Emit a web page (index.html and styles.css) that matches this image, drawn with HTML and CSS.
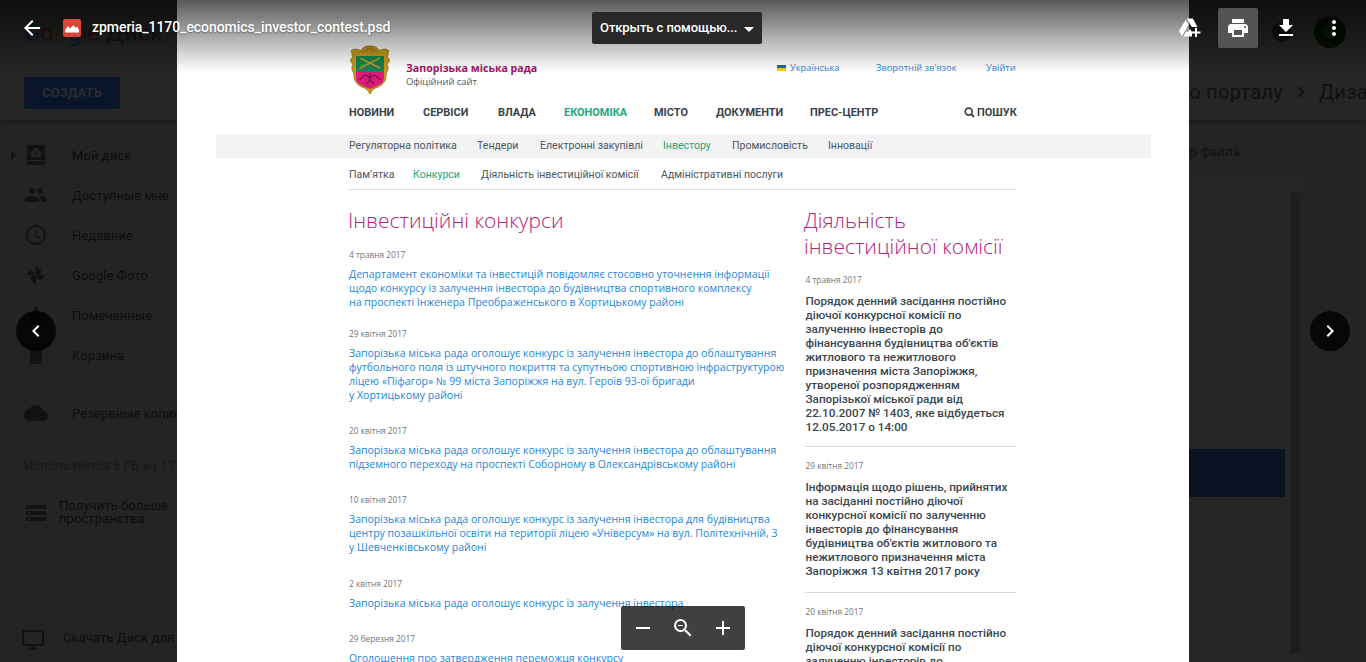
FILE: index.html
```html
<!DOCTYPE html>
<html lang="ru">
<head>
<meta charset="utf-8">
<title>zpmeria_1170_economics_investor_contest.psd</title>
<link rel="stylesheet" href="styles.css">
</head>
<body>
<div class="drive">
  <header class="drive-header">
    <div class="drive-logo"><span class="g-blue">G</span><span class="g-red">o</span><span class="g-yellow">o</span><span class="g-blue">g</span><span class="g-green">l</span><span class="g-red">e</span> <span class="logo-disk">Диск</span></div>
    <div class="apps"><svg width="18" height="18" viewBox="0 0 18 18"><path d="M1 1h4v4H1zM7 1h4v4H7zM13 1h4v4h-4zM1 7h4v4H1zM7 7h4v4H7zM13 7h4v4h-4zM1 13h4v4H1zM7 13h4v4H7zM13 13h4v4h-4z"/></svg></div>
    <div class="bell"></div>
    <div class="avatar">G</div>
    <div class="create">СОЗДАТЬ</div>
    <div class="crumbs"><span>по порталу</span><svg width="8" height="12" viewBox="0 0 8 12"><path d="M1 1l5 5-5 5" fill="none" stroke="#121212" stroke-width="2"/></svg><span>Дизайн</span></div>
  </header>
  <div class="drive-body">
    <nav class="sidebar">
      <div class="nav-item"><svg class="tri" width="5" height="10" viewBox="0 0 5 10"><path d="M0 0l5 5-5 5z"/></svg><svg width="24" height="24" viewBox="0 0 24 24"><path fill-rule="evenodd" d="M5 2h14q2 0 2 2v13H3V4q0-2 2-2zM10.200 5h3.600l4 6.500L16 14H8l-1.800-2.500zM12 8l-2 3.500h4zM3 18h18v2q0 2-2 2H5q-2 0-2-2zm14.500 1.300v1.400H19v-1.400z"/></svg><span>Мой диск</span></div>
      <div class="nav-item"><svg width="24" height="24" viewBox="0 0 24 24"><path d="M16 11c1.660 0 2.990-1.340 2.990-3S17.660 5 16 5s-3 1.340-3 3 1.340 3 3 3zm-8 0c1.660 0 2.990-1.340 2.990-3S9.660 5 8 5 5 6.340 5 8s1.340 3 3 3zm0 2c-2.330 0-7 1.170-7 3.500V19h14v-2.500c0-2.330-4.670-3.500-7-3.500zm8 0c-.29 0-.62.020-.97.050 1.160.84 1.970 1.970 1.970 3.450V19h6v-2.500c0-2.330-4.670-3.500-7-3.500z"/></svg><span>Доступные мне</span></div>
      <div class="nav-item"><svg width="24" height="24" viewBox="0 0 24 24"><path d="M11.990 2C6.470 2 2 6.480 2 12s4.470 10 9.990 10C17.520 22 22 17.520 22 12S17.520 2 11.990 2zM12 20c-4.420 0-8-3.580-8-8s3.580-8 8-8 8 3.580 8 8-3.580 8-8 8zm.5-13H11v6l5.250 3.150.75-1.230-4.500-2.670z"/></svg><span>Недавние</span></div>
      <div class="nav-item"><svg width="24" height="24" viewBox="0 0 24 24"><path d="M12 2l5 5v4.500h-5zM22 12l-5 5v-.5h-4.500v-4.500zM12 22l-5-5v-4.500h5zM2 12l5-5 4.500 4v1z"/></svg><span>Google Фото</span></div>
      <div class="nav-item"><svg width="24" height="24" viewBox="0 0 24 24"><path d="M12 17.270L18.180 21l-1.640-7.030L22 9.240l-7.190-.61L12 2 9.190 8.630 2 9.240l5.460 4.730L5.820 21z"/></svg><span>Помеченные</span></div>
      <div class="nav-item"><svg width="24" height="24" viewBox="0 0 24 24"><path d="M6 19c0 1.100.9 2 2 2h8c1.100 0 2-.9 2-2V7H6v12zM19 4h-3.500l-1-1h-5l-1 1H5v2h14V4z"/></svg><span>Корзина</span></div>
      <div class="nav-item backup"><svg width="24" height="24" viewBox="0 0 24 24"><path d="M19.350 10.040A7.490 7.490 0 0 0 12 4C9.110 4 6.600 5.640 5.350 8.040A5.994 5.994 0 0 0 0 14c0 3.310 2.690 6 6 6h13c2.760 0 5-2.240 5-5 0-2.640-2.050-4.780-4.650-4.960z"/></svg><span>Резервные копии</span></div>
      <div class="usage">Используется 6 ГБ из 17</div>
      <div class="upgrade"><svg width="24" height="24" viewBox="0 0 24 24"><path fill-rule="evenodd" d="M2 20h20v-4H2v4zm2-3h2v2H4v-2zM2 4v4h20V4H2zm4 3H4V5h2v2zm-4 7h20v-4H2v4zm2-3h2v2H4v-2z"/></svg><span>Получить больше<br>пространства</span></div>
      <div class="download"><svg width="24" height="24" viewBox="0 0 24 24"><path d="M21 2H3c-1.100 0-2 .9-2 2v12c0 1.100.9 2 2 2h7v2H8v2h8v-2h-2v-2h7c1.100 0 2-.9 2-2V4c0-1.100-.9-2-2-2zm0 14H3V4h18v12z"/></svg><span>Скачать Диск для</span></div>
    </nav>
    <section class="files">
      <div class="file-head">Размер файла</div>
      <div class="file-table">
        <div class="rows"><div class="row short"></div><div class="row"></div><div class="row"></div><div class="row"></div><div class="row"></div><div class="row selected"></div><div class="row"></div><div class="row"></div><div class="row"></div><div class="row"></div></div>
        <div class="scroll"></div>
      </div>
    </section>
  </div>
</div>

<main class="doc">
  <div class="doc-top">
    <svg class="crest" width="42" height="50" viewBox="0 0 42 50">
      <path d="M21 1c5 0 8 2 9 5 3-2 7-3 10 0-2 2 0 4-2 6 4 2 2 6 0 7 2 4 1 7-1 9 1 7-3 12-8 14-4 1-6 3-8 7-2-4-4-6-8-7-5-2-9-7-8-14-2-2-3-5-1-9-2-1-4-5 0-7-2-2 0-4-2-6 3-3 7-2 10 0 1-3 4-5 9-5z" fill="#c99a1b" stroke="#8d6b16" stroke-width=".8"/>
      <path d="M13 8q8-9 16 0" fill="none" stroke="#a37c18" stroke-width="1.200"/>
      <path d="M17 8l2-4M21 8V3M25 8l-2-4" stroke="#a37c18" fill="none"/>
      <path d="M7 11h28v15H7z" fill="#12864f"/>
      <path d="M7 26h28v7c0 6-5 7-14 11C12 40 7 39 7 33z" fill="#e01a78"/>
      <path d="M11 23l20-10M31 23L11 13" stroke="#b99a25" stroke-width="1.500"/>
      <path d="M10 34c4 1 3-4 7-4l4 3 4-3c4 0 3 5 7 4M21 28v8M17 39l4-4 4 4" fill="none" stroke="#6b1747" stroke-width="1.200"/>
    </svg>
    <div class="brand"><b>Запорізька міська рада</b><span>Офіційний сайт</span></div>
    <div class="links"><i class="flag"></i><a class="ukr">Українська</a><a class="feedback">Зворотній зв'язок</a><a class="login">Увійти</a></div>
  </div>
  <nav class="menu"><a class="m1">НОВИНИ</a><a class="m2">СЕРВІСИ</a><a class="m3">ВЛАДА</a><a class="m4 on">ЕКОНОМІКА</a><a class="m5">МІСТО</a><a class="m6">ДОКУМЕНТИ</a><a class="m7">ПРЕС-ЦЕНТР</a><a class="search"><svg width="11" height="11" viewBox="0 0 11 11"><circle cx="4.700" cy="4.600" r="3.500" fill="none" stroke="#37424a" stroke-width="1.600"/><path d="M7.200 7.200l2.800 2.800" stroke="#37424a" stroke-width="1.900"/></svg>ПОШУК</a></nav>
  <nav class="submenu"><a class="s1">Регуляторна політика</a><a class="s2">Тендери</a><a class="s3">Електронні закупівлі</a><a class="s4 on">Інвестору</a><a class="s5">Промисловість</a><a class="s6">Інновації</a></nav>
  <nav class="tabs"><a class="t1">Пам’ятка</a><a class="t2 on">Конкурси</a><a class="t3">Діяльність інвестиційної комісії</a><a class="t4">Адміністративні послуги</a></nav>
  <div class="columns">
    <section class="contests">
      <h1>Інвестиційні конкурси</h1>
      <article class="tight"><time>4 травня 2017</time><a>Департамент економіки та інвестицій повідомляє стосовно уточнення інформації<br>щодо конкурсу із залучення інвестора до будівництва спортивного комплексу<br>на проспекті Інженера Преображенського в Хортицькому районі</a></article>
      <article><time>29 квітня 2017</time><a>Запорізька міська рада оголошує конкурс із залучення інвестора до облаштування<br>футбольного поля із штучного покриття та супутньою спортивною інфраструктурою<br>ліцею «Піфагор» № 99 міста Запоріжжя на вул. Героїв 93-ої бригади<br>у Хортицькому районі</a></article>
      <article><time>20 квітня 2017</time><a>Запорізька міська рада оголошує конкурс із залучення інвестора до облаштування<br>підземного переходу на проспекті Соборному в Олександрівському районі</a></article>
      <article><time>10 квітня 2017</time><a>Запорізька міська рада оголошує конкурс із залучення інвестора для будівництва<br>центру позашкільної освіти на території ліцею «Універсум» на вул. Політехнічній, 3<br>у Шевченківському районі</a></article>
      <article><time>2 квітня 2017</time><a>Запорізька міська рада оголошує конкурс із залучення інвестора</a></article>
      <article><time>29 березня 2017</time><a>Оголошення про затвердження переможця конкурсу</a></article>
    </section>
    <aside class="commission">
      <h2>Діяльність<br>інвестиційної комісії</h2>
      <article><time>4 травня 2017</time><p>Порядок денний засідання постійно<br>діючої конкурсної комісії по<br>залученню інвесторів до<br>фінансування будівництва об'єктів<br>житлового та нежитлового<br>призначення міста Запоріжжя,<br>утвореної розпорядженням<br>Запорізької міської ради від<br>22.10.2007 № 1403, яке відбудеться<br>12.05.2017 о 14:00</p></article>
      <article class="roomy"><time>29 квітня 2017</time><p>Інформація щодо рішень, прийнятих<br>на засіданні постійно діючої<br>конкурсної комісії по залученню<br>інвесторів до фінансування<br>будівництва об'єктів житлового та<br>нежитлового призначення міста<br>Запоріжжя 13 квітня 2017 року</p></article>
      <article><time>20 квітня 2017</time><p>Порядок денний засідання постійно<br>діючої конкурсної комісії по<br>залученню інвесторів до</p></article>
    </aside>
  </div>
</main>

<div class="toolbar">
  <svg class="back" width="24" height="24" viewBox="0 0 24 24"><path d="M20 11H7.830l5.590-5.590L12 4l-8 8 8 8 1.410-1.410L7.830 13H20v-2z"/></svg>
  <svg class="filetype" width="18" height="18" viewBox="0 0 18 18"><rect width="18" height="18" rx="2" fill="#db4437"/><path d="M2 13.500V11l3-4 2 2.500L10.500 6l2 3 1.500-1.500 2 3.500v2.500z" fill="#fff"/></svg>
  <span class="filename">zpmeria_1170_economics_investor_contest.psd</span>
  <div class="open-with"><span>Открыть с помощью...</span><svg width="10" height="5" viewBox="0 0 10 5"><path d="M0 0h10L5 5z"/></svg></div>
  <div class="actions">
    <svg class="drive-add" width="24" height="24" viewBox="0 0 24 24"><path d="M7.700 3.700L1 14.900l2.900 5.100 6.700-11.300zM8.700 2.500h6.100l4.700 8.500h-5.700zM11.800 12.500l2.200 3.500v4.500H5.500l2.800-4.700h2.500zM17 12h2v3.500h3.500v2H19V21h-2v-3.500h-3.500v-2H17z"/></svg>
    <span class="print"><svg width="24" height="24" viewBox="0 0 24 24"><path d="M19 8H5c-1.660 0-3 1.340-3 3v6h4v4h12v-4h4v-6c0-1.660-1.340-3-3-3zm-3 11H8v-5h8v5zm3-7c-.55 0-1-.45-1-1s.45-1 1-1 1 .45 1 1-.45 1-1 1zm-1-9H6v4h12V3z"/></svg></span>
    <svg width="24" height="24" viewBox="0 0 24 24"><path d="M19 9h-4V3H9v6H5l7 7 7-7zM5 18v2h14v-2H5z"/></svg>
    <svg width="24" height="24" viewBox="0 0 24 24"><path d="M12 8c1.100 0 2-.9 2-2s-.9-2-2-2-2 .9-2 2 .9 2 2 2zm0 2c-1.100 0-2 .9-2 2s.9 2 2 2 2-.9 2-2-.9-2-2-2zm0 6c-1.100 0-2 .9-2 2s.9 2 2 2 2-.9 2-2-.9-2-2-2z"/></svg>
  </div>
</div>
<div class="arrow prev"><svg width="24" height="24" viewBox="0 0 24 24"><path d="M15.410 7.410L14 6l-6 6 6 6 1.410-1.410L10.830 12z"/></svg></div>
<div class="arrow next"><svg width="24" height="24" viewBox="0 0 24 24"><path d="M10 6L8.590 7.410 13.170 12l-4.580 4.590L10 18l6-6z"/></svg></div>
<div class="zoombar">
  <svg width="24" height="24" viewBox="0 0 24 24"><path d="M5 11h14v2H5z"/></svg>
  <svg width="24" height="24" viewBox="0 0 24 24"><path d="M15.500 14h-.79l-.28-.27A6.471 6.471 0 0 0 16 9.500 6.500 6.500 0 1 0 9.500 16c1.610 0 3.090-.59 4.230-1.570l.27.28v.79l5 4.990L20.490 19l-4.990-5zm-6 0C7.010 14 5 11.990 5 9.500S7.010 5 9.500 5 14 7.010 14 9.500 11.990 14 9.500 14zM7 9h5v1H7z"/></svg>
  <svg width="24" height="24" viewBox="0 0 24 24"><path d="M19 13h-6v6h-2v-6H5v-2h6V5h2v6h6z"/></svg>
</div>
</body>
</html>
```
FILE: styles.css
```css
* { box-sizing: border-box; }
html, body { height: 100%; }
body { margin: 0; position: relative; overflow: hidden; background: #242424; font-family: Roboto, "Liberation Sans", sans-serif; }
svg { display: block; flex: none; }
h1, h2, p { margin: 0; }

/* Dimmed Drive window behind the viewer */
.drive { height: 662px; display: flex; flex-direction: column; color: #0c0c0c; overflow: hidden; }
.drive svg { fill: #121212; }
.drive-header { position: relative; height: 120px; flex: none; background: #262626; box-shadow: 0 1px 4px #151515; display: flex; justify-content: space-between; align-items: flex-start; padding: 77px 0 0 24px; overflow: visible; }
.drive-logo { position: absolute; left: 24px; top: 17px; font: 24px/32px Roboto, sans-serif; white-space: nowrap; }
.g-blue { color: #0b1a33; } .g-red { color: #2c0f0c; } .g-yellow { color: #2b2407; } .g-green { color: #0b2413; }
.logo-disk { color: #151515; }
.apps { position: absolute; left: 1226px; top: 22px; }
.bell { position: absolute; left: 1272px; top: 22px; width: 20px; height: 20px; border-radius: 50%; background: #101010; }
.avatar { position: absolute; left: 1314px; top: 16px; width: 32px; height: 32px; border-radius: 50%; background: #040d02; color: #1c221b; font-size: 18px; line-height: 32px; text-align: center; }
.create { width: 96px; height: 32px; border-radius: 2px; background: #0b1529; color: #272b32; font: bold 13px/32px Roboto, sans-serif; text-align: center; }
.crumbs { width: 183px; height: 30px; display: flex; align-items: center; gap: 14px; font-size: 20px; letter-spacing: .3px; color: #111; white-space: nowrap; overflow: hidden; }
.crumbs span:first-child { width: 100px; flex: none; display: flex; justify-content: flex-end; }
.drive-body { flex: 1; display: flex; justify-content: space-between; }
.sidebar { width: 177px; padding-top: 15px; font-size: 13px; letter-spacing: .08px; white-space: nowrap; overflow: hidden; }
.nav-item { position: relative; height: 40px; display: flex; align-items: center; padding-left: 24px; gap: 24px; }
.tri { position: absolute; left: 11px; top: 15px; }
.backup { margin-top: 9px; height: 58px; border-top: 1px solid #202020; border-bottom: 1px solid #202020; }
.usage { height: 48px; line-height: 48px; padding-left: 24px; color: #171717; }
.upgrade { display: flex; align-items: center; height: 46px; padding-left: 24px; gap: 11px; line-height: 13px; }
.upgrade span { padding-bottom: 3px; }
.download { display: flex; align-items: center; height: 44px; margin-top: 81px; padding-left: 21px; gap: 18px; border-top: 1px solid #222; }
.download span { padding-bottom: 4px; }
.files { width: 177px; }
.file-head { width: 51px; height: 57px; line-height: 64px; font-size: 13px; letter-spacing: .2px; color: #111; display: flex; justify-content: flex-end; white-space: nowrap; }
.file-table { display: flex; width: 112px; height: 485px; background: #262626; }
.rows { width: 96px; padding-top: 1px; }
.row { height: 48px; border-bottom: 1px solid #222; }
.row.short { height: 31px; }
.row:nth-child(6) { height: 48px; margin-top: 48px; }
.selected { background: #0a1323; border: 0; }
.scroll { width: 9px; margin: 16px 0 8px 6px; background: #1e1e1e; }

/* Previewed document */
.doc { position: absolute; left: 177px; top: 0; width: 1012px; height: 662px; overflow: hidden; background: #fff; color: #4d565c; white-space: nowrap; padding-top: 45px; }
.doc-top { display: flex; padding: 0 173px 0 172px; height: 56px; }
.brand { margin-left: 15px; padding-top: 16px; display: flex; flex-direction: column; font: 9.400px/14px "Open Sans", sans-serif; width: 135px; }
.brand b { color: #a5105f; font-size: 10.600px; }
.links { margin-left: auto; padding-top: 16px; height: 30px; display: flex; align-items: center; font: 9.300px/14px "Open Sans", sans-serif; color: #2386dc; }
.flag { width: 9px; height: 6px; margin-right: 4px; background: linear-gradient(#1c62b7 50%, #f5cf13 50%); }
.ukr { width: 86px; } .feedback { width: 110px; } .login { width: 30px; }
.menu { height: 33px; display: flex; padding-left: 172px; font: bold 10.950px/23px Roboto, sans-serif; color: #37424a; }
.m1 { width: 74px; } .m2 { width: 75px; } .m3 { width: 66px; } .m4 { width: 90px; } .m5 { width: 62px; } .m6 { width: 94px; } .m7 { width: 154px; }
.search { display: flex; align-items: center; height: 23px; gap: 2px; }
.doc .on { color: #1aa77c; }
.submenu { margin: 0 38px 0 39px; padding-left: 133px; display: flex; height: 24px; background: #f3f3f3; font-size: 10.550px; line-height: 24px; }
.s1 { width: 128px; } .s2 { width: 63px; } .s3 { width: 123px; } .s4 { width: 69px; } .s5 { width: 96px; }
.tabs { margin: 0 173px 0 172px; height: 32px; display: flex; border-bottom: 1px solid #ddd; font-size: 10.550px; line-height: 33px; }
.t1 { width: 64px; } .t2 { width: 68px; } .t3 { width: 180px; }
.columns { display: flex; padding: 17px 0 0 172px; }
.contests { width: 456px; }
h1, h2 { font: 300 21px/26px "Open Sans", sans-serif; color: #b0247a; }
h1 { margin-bottom: 15px; margin-left: -1px; }
time { display: block; font: 8.300px/14px "Open Sans", sans-serif; color: #707579; margin-bottom: 5px; }
.contests article { margin-bottom: 22.300px; font: 10.540px/14px "Open Sans", sans-serif; color: #2386dc; }
.contests .tight { margin-bottom: 17.900px; }
.contests a { display: block; }
.commission { width: 211px; }
.commission h2 { margin-bottom: 14px; margin-left: -1px; }
.commission article { padding-bottom: 12px; margin-bottom: 12px; border-bottom: 1px solid #d9d9d9; }
.commission .roomy { padding-bottom: 14px; }
.commission time { margin-bottom: 7px; }
.commission time, .commission p { padding-left: .5px; }
.commission p { font: 500 11.730px/14px Roboto, sans-serif; color: #3b464e; }

/* Viewer controls */
.toolbar { position: absolute; left: 0; top: 0; width: 1366px; height: 72px; background: linear-gradient(rgba(0,0,0,.65), transparent); color: #fff; }
.toolbar svg, .arrow svg, .zoombar svg { fill: #fff; }
.back { position: absolute; left: 20px; top: 16px; }
.filetype { position: absolute; left: 63px; top: 19px; }
.filename { position: absolute; left: 92px; top: 17px; font: 500 14px/20px Roboto, sans-serif; letter-spacing: -.05px; text-shadow: 0 1px 2px rgba(0,0,0,.4); white-space: nowrap; }
.open-with { position: absolute; left: 592px; top: 12px; width: 170px; height: 32px; border-radius: 2px; background: #292929; display: flex; align-items: center; justify-content: space-between; padding: 0 8px; font: 500 13px/32px Roboto, sans-serif; letter-spacing: -.08px; white-space: nowrap; }
.open-with svg { margin-top: 3px; }
.actions { position: absolute; left: 1178px; top: 8px; height: 40px; display: flex; align-items: center; gap: 24px; }
.drive-add { margin-right: -8px; }
.print { width: 40px; height: 40px; margin-right: -8px; border-radius: 2px; background: #545454; display: grid; place-items: center; }
.arrow { position: absolute; top: 311px; width: 40px; height: 40px; border-radius: 50%; background: rgba(0,0,0,.8); display: grid; place-items: center; }
.prev { left: 16px; } .next { left: 1310px; }
.zoombar { position: absolute; left: 621px; top: 606px; width: 124px; height: 44px; border-radius: 2px; background: rgba(0,0,0,.75); display: flex; align-items: center; justify-content: space-between; padding: 0 10px; }
```
